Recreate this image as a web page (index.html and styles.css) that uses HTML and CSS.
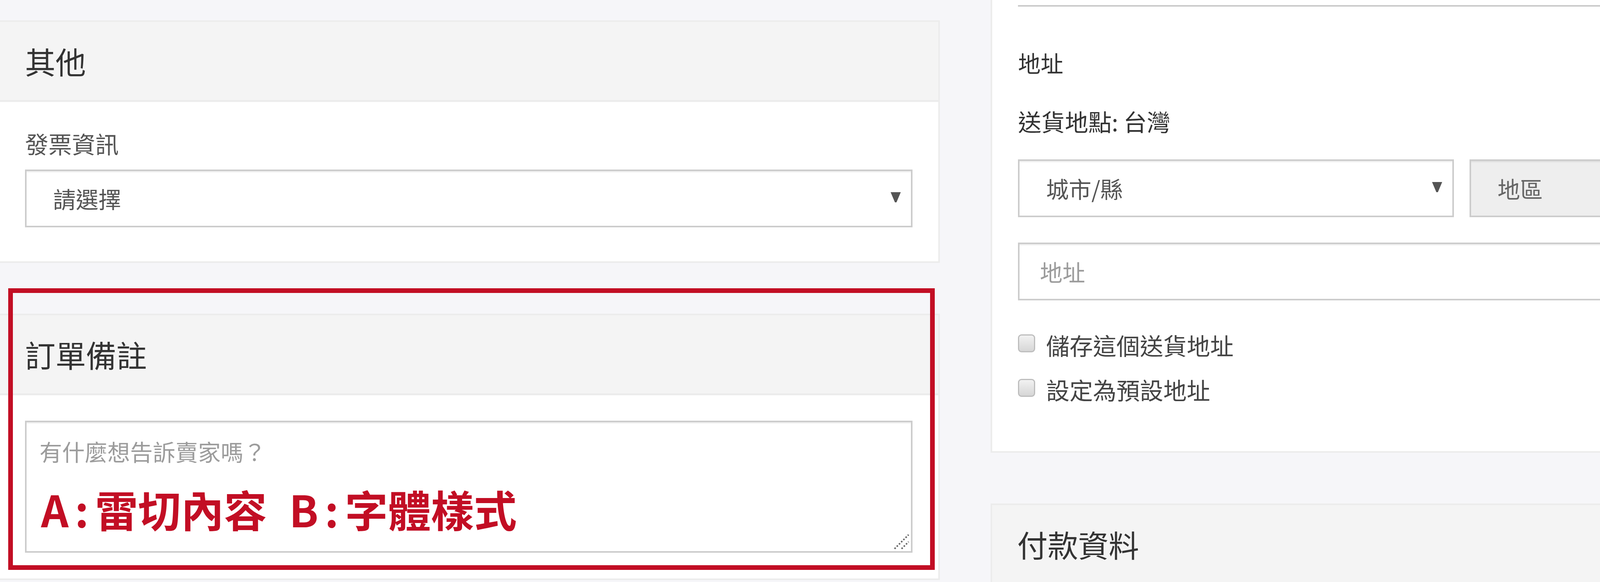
FILE: index.html
```html
<!DOCTYPE html>
<html lang="zh-Hant">
<head>
  <meta charset="UTF-8" />
  <title>結帳</title>
  <link rel="stylesheet" href="styles.css">
</head>
<body>
  <div class="layout">
    <div class="col">
      <section class="card">
        <div class="card-head">其他</div>
        <div class="card-body">
          <div class="label">發票資訊</div>
          <div class="select">
            <span>請選擇</span>
            <svg class="caret" width="26" height="26" viewBox="0 0 26 26"><polygon points="0,0 26,0 15,26 11,26" fill="#555"/></svg>
          </div>
        </div>
      </section>

      <section class="card note-card">
        <div class="card-head">訂單備註</div>
        <div class="card-body note-body">
          <div class="note-box">
            <div class="placeholder">有什麼想告訴賣家嗎？</div>
            <div class="mark">A<span class="colon">:</span>雷切內容 B<span class="colon">:</span>字體樣式</div>
            <svg class="grip" width="40" height="40" viewBox="0 0 40 40">
              <path d="M2 38 L38 2 M20 38 L38 20" stroke="#666" stroke-width="4" stroke-dasharray="4 4"/>
            </svg>
          </div>
        </div>
        <div class="red-frame"></div>
      </section>
    </div>

    <div class="col">
      <section class="card address-card">
        <div class="rule"></div>
        <div class="label dark addr-title">地址</div>
        <div class="label dark ship-to">送貨地點: 台灣</div>
        <div class="select-row">
          <div class="select">
            <span>城市/縣</span>
            <svg class="caret" width="26" height="26" viewBox="0 0 26 26"><polygon points="0,0 26,0 15,26 11,26" fill="#555"/></svg>
          </div>
          <div class="select disabled">
            <span>地區</span>
            <svg class="caret" width="26" height="26" viewBox="0 0 26 26"><polygon points="0,0 26,0 15,26 11,26" fill="#666"/></svg>
          </div>
        </div>
        <div class="input"><span class="placeholder">地址</span></div>
        <div class="check first"><span class="box"></span>儲存這個送貨地址</div>
        <div class="check"><span class="box"></span>設定為預設地址</div>
      </section>

      <section class="card">
        <div class="card-head">付款資料</div>
        <div class="card-body"></div>
      </section>
    </div>
  </div>
</body>
</html>
```

FILE: styles.css
```css
body {
  margin: 0;
  padding-top: 52px;
  background: #f6f6f9;
  font-family: "Noto Sans CJK TC", "Noto Sans", sans-serif;
  color: #333;
  overflow: hidden;
}
.layout {
  display: grid;
  grid-template-columns: 2410px 2409px;
  column-gap: 130px;
  margin-left: -4px;
  align-items: start;
}
.col {
  display: flex;
  flex-direction: column;
  gap: 130px;
}
.card {
  background: #fff;
  border: 4px solid #ececec;
  position: relative;
}
.card-head {
  height: 200px;
  display: flex;
  align-items: center;
  padding: 0 64px;
  background: #f4f4f4;
  border-bottom: 5px solid #ececec;
  font-size: 78px;
  line-height: 1;
  color: #333;
}
.card-body {
  padding: 76px 66px 87px 64px;
}
.label {
  font-size: 60px;
  line-height: 60px;
  color: #555;
  margin-bottom: 37px;
}
.label.dark {
  color: #333;
  margin-bottom: 0;
}
.select {
  height: 148px;
  box-sizing: border-box;
  border: 4px solid #cccccc;
  box-shadow: inset 0 4px 3px -1px rgba(0, 0, 0, 0.07);
  background: #fff;
  display: flex;
  align-items: center;
  justify-content: space-between;
  padding: 0 26px 0 68px;
  font-size: 58px;
  color: #555;
}
.select.disabled {
  background: #eeeeee;
  color: #666;
}
.caret {
  display: block;
  margin-top: -6px;
}

/* order note */
.note-body {
  padding: 65px 66px 66px 64px;
}
.note-box {
  position: relative;
  height: 338px;
  box-sizing: border-box;
  border: 4px solid #cccccc;
  box-shadow: inset 0 4px 3px -1px rgba(0, 0, 0, 0.07);
  padding: 37px 30px 0 33px;
}
.placeholder {
  font-size: 58px;
  line-height: 74px;
  color: #9c9c9c;
}
.mark {
  margin-top: 44px;
  margin-left: 4px;
  font-size: 110px;
  line-height: 132px;
  font-weight: 700;
  color: #c20e24;
  word-spacing: 32px;
}
.colon {
  padding: 0 16px;
}
.grip {
  position: absolute;
  right: 4px;
  bottom: 4px;
}
.red-frame {
  position: absolute;
  top: -69px;
  left: 21px;
  right: 9px;
  bottom: 22px;
  border: 12px solid #c20e24;
  pointer-events: none;
}

/* address */
.address-card {
  margin-top: -100px;
  padding: 57px 64px 128px 66px;
}
.rule {
  height: 4px;
  background: #cbcbcb;
}
.addr-title {
  font-size: 58px;
  line-height: 58px;
  margin-top: 114px;
}
.ship-to {
  margin-top: 91px;
}
.select-row {
  display: grid;
  grid-template-columns: 1fr 1fr;
  column-gap: 40px;
  margin-top: 68px;
}
.input {
  margin-top: 65px;
  height: 148px;
  box-sizing: border-box;
  border: 4px solid #cccccc;
  box-shadow: inset 0 4px 3px -1px rgba(0, 0, 0, 0.07);
  display: flex;
  align-items: center;
  padding-left: 52px;
}
.input .placeholder {
  line-height: 58px;
}
.check {
  display: flex;
  align-items: center;
  gap: 28px;
  font-size: 60px;
  line-height: 60px;
  color: #444;
  margin-top: 54px;
}
.check.first {
  margin-top: 84px;
}
.box {
  width: 44px;
  height: 46px;
  box-sizing: border-box;
  border: 3px solid #bdbdbd;
  border-radius: 9px;
  background: linear-gradient(#f2f2f2, #d6d6d6);
  margin-top: -8px;
}
```
